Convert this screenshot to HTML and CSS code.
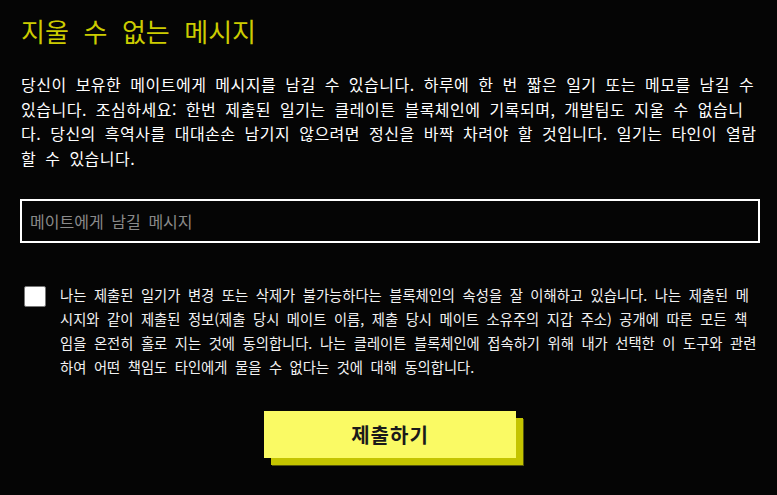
FILE: index.html
```html
<!DOCTYPE html>
<html lang="ko">
<head>
<meta charset="utf-8">
<link rel="stylesheet" href="styles.css">
</head>
<body>
<main class="page">
  <h1 class="title">지울 수 없는 메시지</h1>
  <p class="intro">당신이 보유한 메이트에게 메시지를 남길 수 있습니다. 하루에 한 번 짧은 일기 또는 메모를 남길 수 있습니다. 조심하세요: 한번 제출된 일기는 클레이튼 블록체인에 기록되며, 개발팀도 지울 수 없습니다. 당신의 흑역사를 대대손손 남기지 않으려면 정신을 바짝 차려야 할 것입니다. 일기는 타인이 열람할 수 있습니다.</p>
  <input class="message" type="text" placeholder="메이트에게 남길 메시지">
  <label class="agree">
    <span class="check"></span>
    <span class="terms">나는 제출된 일기가 변경 또는 삭제가 불가능하다는 블록체인의 속성을 잘 이해하고 있습니다. 나는 제출된 메시지와 같이 제출된 정보(제출 당시 메이트 이름, 제출 당시 메이트 소유주의 지갑 주소) 공개에 따른 모든 책임을 온전히 홀로 지는 것에 동의합니다. 나는 클레이튼 블록체인에 접속하기 위해 내가 선택한 이 도구와 관련하여 어떤 책임도 타인에게 물을 수 없다는 것에 대해 동의합니다.</span>
  </label>
  <div class="actions">
    <button class="submit" type="button">제출하기</button>
  </div>
</main>
</body>
</html>
```

FILE: styles.css
```css
html, body {
  margin: 0;
  padding: 0;
  background: #050505;
}

body {
  font-family: "Noto Sans CJK KR", "Noto Sans", sans-serif;
  color: #ffffff;
  min-height: 495px;
}

.page {
  padding: 13px 17px 36px 20px;
  display: flex;
  flex-direction: column;
}

.title {
  margin: 0 0 0 1px;
  font-size: 26px;
  font-weight: 400;
  line-height: 36px;
  color: #cccc00;
  word-spacing: 0.28em;
}

.intro {
  margin: 23px 0 0 1px;
  font-size: 16px;
  line-height: 24.5px;
  letter-spacing: 0.5px;
  word-spacing: 0.25em;
  word-break: break-all;
}

.message {
  margin-top: 29px;
  box-sizing: border-box;
  width: 740px;
  height: 44px;
  border: 2px solid #ffffff;
  background: #050505;
  color: #ffffff;
  padding: 0 8px;
  font-family: "Noto Sans CJK KR", sans-serif;
  font-size: 16px;
  word-spacing: 0.2em;
  outline: none;
}

.message::placeholder {
  color: #8a8a8a;
}

.agree {
  margin-top: 40px;
  display: flex;
  align-items: flex-start;
  gap: 14px;
  padding-left: 4px;
}

.check {
  flex: none;
  box-sizing: border-box;
  width: 22px;
  height: 21px;
  margin-top: 3px;
  background: #ffffff;
  border: 1px solid #767676;
  border-radius: 2px;
}

.terms {
  font-size: 14.3px;
  line-height: 24px;
  color: #f2f2f2;
  word-spacing: 0.25em;
  word-break: break-all;
}

.actions {
  margin-top: 32px;
  display: flex;
  justify-content: center;
  padding-bottom: 12px;
}

.submit {
  width: 252px;
  height: 47px;
  border: none;
  padding: 0;
  background: #fafa64;
  color: #1a1a1a;
  font-family: "Noto Sans CJK KR", sans-serif;
  font-size: 20px;
  font-weight: 700;
  letter-spacing: 1px;
  cursor: pointer;
  box-shadow: 7px 7px 0 0 #c4c400, 8px 8px 0 0 #55550a;
}
```
